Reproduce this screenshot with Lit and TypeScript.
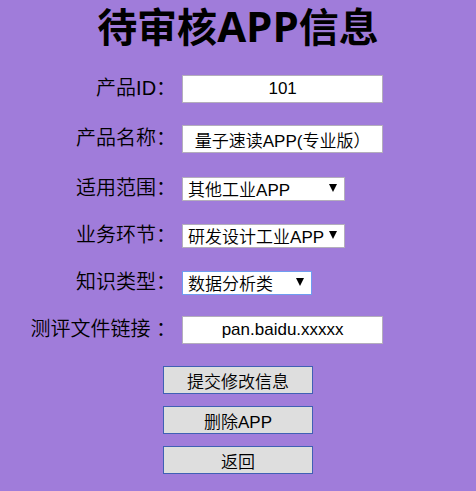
import { LitElement, html, css } from "lit";
import { customElement } from "lit/decorators.js";

interface TextField {
  id: string;
  label: string;
  value: string;
}

interface ChoiceField {
  id: string;
  label: string;
  options: string[];
  active?: boolean;
}

const identity: TextField[] = [
  { id: "product-id", label: "产品ID：", value: "101" },
  { id: "product-name", label: "产品名称：", value: "量子速读APP(专业版）" },
];

const choices: ChoiceField[] = [
  { id: "scope", label: "适用范围：", options: ["其他工业APP"] },
  { id: "stage", label: "业务环节：", options: ["研发设计工业APP"] },
  { id: "knowledge", label: "知识类型：", options: ["数据分析类"], active: true },
];

const links: TextField[] = [
  { id: "file-link", label: "测评文件链接 ：", value: "pan.baidu.xxxxx" },
];

@customElement("app-root")
export class AppRoot extends LitElement {
  static styles = css`
    :host {
      display: block;
      box-sizing: border-box;
      min-height: 100vh;
      padding-bottom: 16px;
      background: #a07cda;
      color: #000;
      font-family: "Liberation Sans", "Noto Sans CJK SC", sans-serif;
    }
    h1 {
      margin: 0;
      height: 75px;
      font: bold 40px/50px "Noto Sans CJK SC", sans-serif;
      text-align: center;
    }
    .latin {
      font-family: "Open Sans", sans-serif;
      font-size: 42px;
    }
    .row {
      display: grid;
      grid-template-columns: 37% 1fr;
      column-gap: 6px;
      align-items: center;
      height: 28px;
      margin-bottom: 22px;
    }
    .row.choice {
      margin-bottom: 19px;
    }
    label {
      padding-bottom: 2px;
      font-size: 20px;
      line-height: 26px;
      font-weight: 350;
      text-align: right;
      white-space: pre;
    }
    input,
    select,
    button {
      box-sizing: border-box;
      margin: 0;
      border: 1px solid #b4aebc;
      border-radius: 0;
      background: #fff;
      color: #000;
      font-family: inherit;
      font-size: 17px;
      font-weight: 350;
      outline: none;
    }
    input {
      width: 201px;
      height: 28px;
      padding: 0 2px;
      text-align: center;
    }
    .picker {
      position: relative;
      justify-self: start;
      display: flex;
      width: 163px;
    }
    .picker.active {
      width: 130px;
    }
    select {
      appearance: none;
      width: 100%;
      height: 24px;
      padding: 3px 0 0 5px;
      line-height: 20px;
    }
    .active select {
      border-color: #6f9df0;
    }
    .arrow {
      position: absolute;
      right: 8px;
      top: 7px;
      width: 8px;
      height: 8px;
      pointer-events: none;
    }
    .actions {
      display: flex;
      flex-direction: column;
      align-items: center;
      gap: 12px;
    }
    button {
      width: 150px;
      height: 28px;
      padding: 0;
      border-color: #4060b4;
      background: #dedede;
    }
  `;

  private textRow(f: TextField) {
    return html`<div class="row">
      <label for=${f.id}>${f.label}</label>
      <input id=${f.id} type="text" .value=${f.value} />
    </div>`;
  }

  private choiceRow(f: ChoiceField) {
    return html`<div class="row choice">
      <label for=${f.id}>${f.label}</label>
      <span class="picker ${f.active ? "active" : ""}">
        <select id=${f.id}>
          ${f.options.map((o) => html`<option>${o}</option>`)}
        </select>
        <svg class="arrow" viewBox="0 0 8 8" aria-hidden="true">
          <path d="M0 0H8L4 8Z" />
        </svg>
      </span>
    </div>`;
  }

  render() {
    return html`
      <h1>待审核<span class="latin">APP</span>信息</h1>
      <form @submit=${(e: Event) => e.preventDefault()}>
        ${identity.map((f) => this.textRow(f))}
        ${choices.map((f) => this.choiceRow(f))}
        ${links.map((f) => this.textRow(f))}
        <div class="actions">
          <button type="submit">提交修改信息</button>
          <button type="button">删除APP</button>
          <button type="button">返回</button>
        </div>
      </form>
    `;
  }
}
